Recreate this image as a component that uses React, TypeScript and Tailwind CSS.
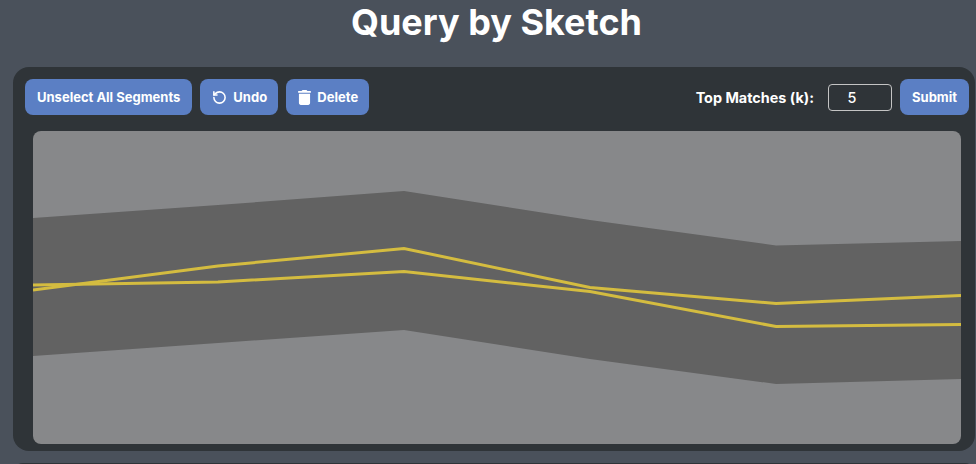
import { RotateCcw } from "lucide-react";

const btn =
  "h-9 flex items-center rounded-lg bg-[#5b7fc4] text-white text-[13px] font-bold whitespace-nowrap pt-px";

function TrashIcon() {
  return (
    <svg width="13" height="15" viewBox="0 0 448 512" fill="currentColor">
      <path d="M135.2 17.7C140.6 6.8 151.7 0 163.8 0H284.2c12.1 0 23.2 6.8 28.6 17.7L320 32h96c17.7 0 32 14.3 32 32s-14.3 32-32 32H32C14.3 96 0 81.7 0 64S14.3 32 32 32h96l7.200-14.300zM32 128H416V448c0 35.300-28.700 64-64 64H96c-35.300 0-64-28.700-64-64V128z" />
    </svg>
  );
}

export default function App() {
  return (
    <div
      className="w-[976px] h-[464px] overflow-hidden bg-[#4a515b] flex flex-col pl-[13px]"
      style={{ fontFamily: "Inter, 'Liberation Sans', sans-serif" }}
    >
      <h1 className="h-[67px] shrink-0 pl-[4px] flex items-start justify-center pt-[2px] text-[36px] leading-[40px] font-bold text-white">
        Query by Sketch
      </h1>
      <div className="w-[962px] h-[384px] shrink-0 bg-[#2f3438] rounded-[16px] flex flex-col pt-3 pl-3 pr-[6px]">
        <div className="flex items-center justify-between h-9">
          <div className="flex gap-2">
            <button className={`${btn} px-3`}>Unselect All Segments</button>
            <button className={`${btn} pl-3 gap-[6px] w-[78px]`}>
              <RotateCcw size={15} strokeWidth={2.5} />
              Undo
            </button>
            <button className={`${btn} pl-3 gap-[6px] w-[83px]`}>
              <TrashIcon />
              Delete
            </button>
          </div>
          <div className="flex items-center">
            <span className="text-white text-[14.4px] font-bold mr-[14px] pt-px">Top Matches (k):</span>
            <input
              readOnly
              value="5"
              className="w-16 h-[27px] mr-2 pr-4 rounded-[4px] border border-[#c4c4c4] bg-transparent text-center text-white text-[14.4px] font-medium outline-none"
            />
            <button className={`${btn} px-3`}>Submit</button>
          </div>
        </div>
        <div className="mt-4 ml-2 w-[928px] h-[313px] rounded-lg overflow-hidden bg-[#87888a]">
          <svg width="928" height="313" viewBox="33 131 928 313" className="block">
            <polygon
              fill="#626262"
              points="33,218 218,205 404,191 590,220 776,245.500 961,241 961,379 776,384 590,359 404,330 218,343 33,356"
            />
            <polyline
              fill="none"
              stroke="#d4bc40"
              strokeWidth="3"
              points="33,290 218,266 404,248.500 590,287.500 776,303.500 961,295.500"
            />
            <polyline
              fill="none"
              stroke="#d4bc40"
              strokeWidth="3"
              points="33,285 218,282 404,271.500 590,291.500 776,326.500 961,324.500"
            />
          </svg>
        </div>
      </div>
      <div className="w-[962px] h-5 shrink-0 mt-3 bg-[#2f3438] rounded-[16px]" />
    </div>
  );
}
